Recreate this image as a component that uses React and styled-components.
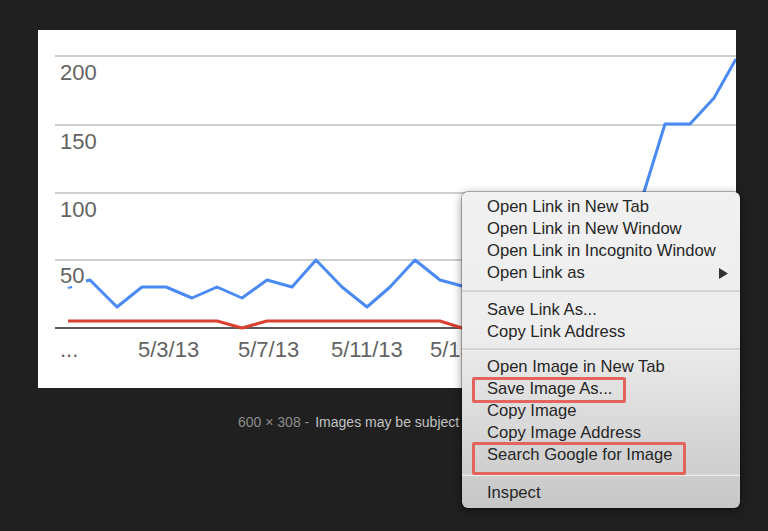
import styled, { createGlobalStyle } from "styled-components";

const GlobalStyle = createGlobalStyle`
  html, body {
    margin: 0;
    padding: 0;
    background: #202020;
    font-family: "Liberation Sans", Arial, sans-serif;
  }
`;

const Page = styled.div`
  position: relative;
  width: 768px;
  height: 531px;
  padding: 30px 0 0 38px;
  box-sizing: border-box;
  overflow: hidden;
`;

const ImageFrame = styled.div`
  width: 698px;
  height: 358px;
  background: #ffffff;
`;

const Chart = styled.svg`
  display: block;
  width: 100%;
  height: 100%;
`;

const Caption = styled.div`
  margin-top: 26px;
  padding-left: 200px;
  font-size: 14px;
  line-height: 16px;
  white-space: nowrap;
  color: #8c8c8c;
`;

const CaptionNote = styled.span`
  margin-left: 6px;
  color: #c2c2c2;
`;

const Menu = styled.div`
  position: absolute;
  left: 462px;
  top: 192px;
  width: 278px;
  padding: 4px 0;
  box-sizing: border-box;
  border-radius: 6px;
  background: linear-gradient(
    to bottom,
    #f1f1f1 0%,
    #ededed 45%,
    #d8d8d8 75%,
    #c6c6c6 100%
  );
  box-shadow: 0 2px 10px rgba(0, 0, 0, 0.45), 0 0 0 1px rgba(0, 0, 0, 0.25);
  color: #262626;
`;

const MenuItem = styled.div`
  display: flex;
  align-items: center;
  justify-content: space-between;
  height: 22px;
  padding: 0 12px 0 25px;
  font-size: 16.6px;
  white-space: nowrap;
`;

const Label = styled.span`
  position: relative;

  ${(p) =>
    p.$marked &&
    `
    &::after {
      content: "";
      position: absolute;
      top: ${p.$top}px;
      bottom: ${p.$bottom}px;
      left: -15px;
      right: ${p.$right}px;
      border: 3px solid #e3645c;
      border-radius: 2px;
    }
  `}
`;

const Separator = styled.div`
  display: flex;
  align-items: center;
  height: ${(p) => p.$h}px;

  &::before {
    content: "";
    flex: 1;
    height: 2px;
    background: #d4d4d4;
    border-bottom: 1px solid rgba(255, 255, 255, 0.6);
  }
`;

const Arrow = () => (
  <svg width="9" height="11" viewBox="0 0 9 11">
    <polygon points="0,0 9,5.5 0,11" fill="#333" />
  </svg>
);

const blue = [
  [48, 251], [52, 250], [79, 277], [104, 257], [128, 257], [154, 268],
  [179, 257], [204, 268], [229, 250], [254, 257], [278, 230], [304, 257],
  [329, 277], [352, 257], [377, 230], [402, 250], [424, 256], [470, 262],
  [520, 252], [565, 245], [606, 162], [627, 94], [652, 94], [676, 68],
  [698, 29],
];

const red = [
  [30, 291], [179, 291], [204, 298], [229, 291], [402, 291], [424, 298],
  [480, 298], [500, 291], [640, 291],
];

const pts = (arr) => arr.map((p) => p.join(",")).join(" ");

const yLabels = [
  { v: "200", y: 50 },
  { v: "150", y: 119 },
  { v: "100", y: 187 },
  { v: "50", y: 253 },
];

// the last date sits under the context menu, only "5/1" shows
const xLabels = [
  { v: "...", x: 22 },
  { v: "5/3/13", x: 100 },
  { v: "5/7/13", x: 200 },
  { v: "5/11/13", x: 293 },
  { v: "5/15", x: 392 },
];

const TrendChart = () => (
  <Chart viewBox="0 0 698 358">
    {[26, 95, 163, 230].map((y) => (
      <line key={y} x1="17" x2="698" y1={y} y2={y} stroke="#cfcfcf" strokeWidth="2" />
    ))}
    <line x1="17" x2="698" y1="298" y2="298" stroke="#5a5a5a" strokeWidth="2" />
    <g fontFamily="Liberation Sans, Arial, sans-serif" fontSize="22" fill="#636363">
      {yLabels.map((l) => (
        <text key={l.v} x="22" y={l.y}>{l.v}</text>
      ))}
      {xLabels.map((l) => (
        <text key={l.v} x={l.x} y="327">{l.v}</text>
      ))}
    </g>
    <line x1="30" y1="258" x2="34" y2="257" stroke="#4a8af4" strokeWidth="2" />
    <polyline points={pts(blue)} fill="none" stroke="#4a8af4" strokeWidth="3" strokeLinejoin="round" />
    <polyline points={pts(red)} fill="none" stroke="#d8402f" strokeWidth="3" strokeLinejoin="round" />
  </Chart>
);

const App = () => {
  return (
    <>
      <GlobalStyle />
      <Page>
        <ImageFrame>
          <TrendChart />
        </ImageFrame>
        <Caption>
          600 × 308 -<CaptionNote>Images may be subject</CaptionNote>
        </Caption>

        <Menu>
          <MenuItem>Open Link in New Tab</MenuItem>
          <MenuItem>Open Link in New Window</MenuItem>
          <MenuItem>Open Link in Incognito Window</MenuItem>
          <MenuItem>
            Open Link as
            <Arrow />
          </MenuItem>
          <Separator $h={15} />
          <MenuItem>Save Link As...</MenuItem>
          <MenuItem>Copy Link Address</MenuItem>
          <Separator $h={13} />
          <MenuItem>Open Image in New Tab</MenuItem>
          <MenuItem>
            <Label $marked $top={-2} $bottom={-4} $right={-14}>
              Save Image As...
            </Label>
          </MenuItem>
          <MenuItem>Copy Image</MenuItem>
          <MenuItem>Copy Image Address</MenuItem>
          <MenuItem>
            <Label $marked $top={-3} $bottom={-10} $right={-14}>
              Search Google for Image
            </Label>
          </MenuItem>
          <Separator $h={16} />
          <MenuItem>Inspect</MenuItem>
        </Menu>
      </Page>
    </>
  );
};

export default App;
